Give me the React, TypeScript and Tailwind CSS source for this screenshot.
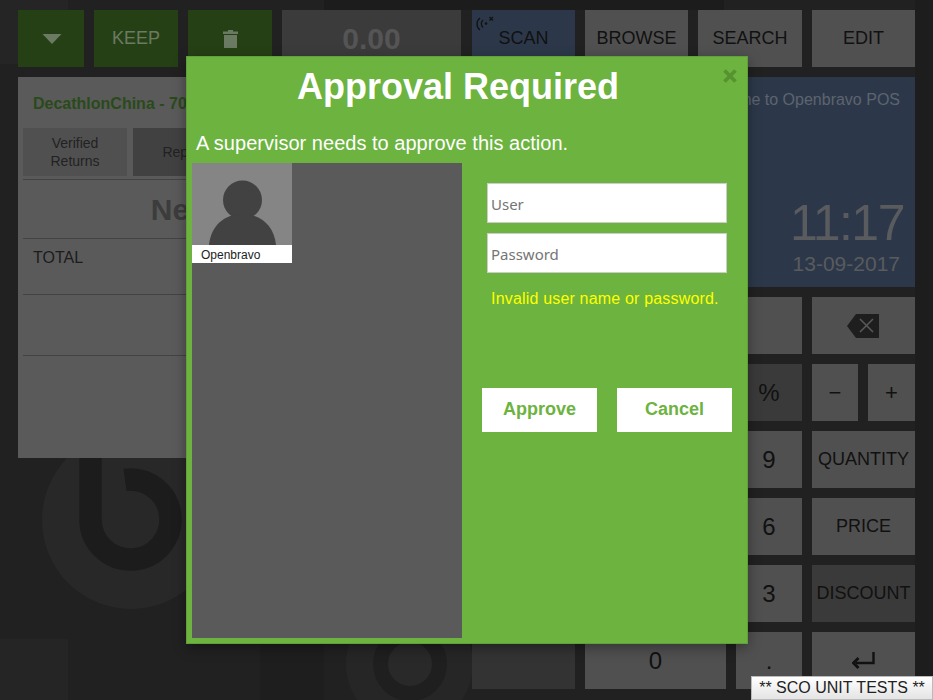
const sans = "font-['Liberation_Sans',Arial,sans-serif]";

function TopButton({ className, children }: { className: string; children: React.ReactNode }) {
  return (
    <div className={`relative flex h-[57px] items-center justify-center text-[18px] ${className}`}>
      {children}
    </div>
  );
}

function Key({ className = "bg-[#505050]", children }: { className?: string; children?: React.ReactNode }) {
  return (
    <div className={`flex h-[57px] items-center justify-center text-[18px] text-[#111] ${className}`}>
      {children}
    </div>
  );
}

function Backdrop() {
  return (
    <svg className="absolute inset-0" width="933" height="700" viewBox="0 0 933 700">
      <rect width="933" height="700" fill="#212121" />
      <rect x="0" y="0" width="68" height="64" fill="#252525" />
      <rect x="0" y="639" width="68" height="61" fill="#252525" />
      <rect x="260" y="640" width="64" height="60" fill="#1e1e1e" />
      <rect x="324" y="0" width="400" height="10" fill="#1c1c1c" />
      <rect x="915" y="0" width="18" height="700" fill="#1d1d1d" />
      <circle cx="131" cy="520" r="89" fill="#282828" />
      <path d="M90.500 440 V519.500 A40 40 0 1 0 125 479.900" fill="none" stroke="#1c1c1c" strokeWidth="22.500" />
      <circle cx="409.500" cy="664" r="63.500" fill="#262626" />
      <circle cx="410" cy="664" r="29.500" fill="#292929" stroke="#1f1f1f" strokeWidth="15" />
    </svg>
  );
}

function ApprovalDialog() {
  return (
    <div className="absolute left-[186px] top-[56px] h-[588px] w-[562px] border border-[#629f3a] bg-[#6cb33f] text-white shadow-[0_4px_12px_rgba(0,0,0,0.35)]">
      <svg className="absolute left-[536px] top-[12px]" width="14" height="14" viewBox="0 0 14 14">
        <path d="M1.500 1.500 L12.500 12.500 M12.500 1.500 L1.500 12.500" stroke="#579231" strokeWidth="3.600" />
      </svg>
      <h1 className="h-[60px] pr-[18px] pt-[9px] text-center text-[36px] leading-[42px] font-bold">Approval Required</h1>
      <p className="h-[46px] pl-[9px] pt-[15px] text-[20px] leading-[23px] tracking-[0.02px]">A supervisor needs to approve this action.</p>
      <div className="flex">
        <div className="ml-[5px] h-[475px] w-[270px] bg-[#5a5a5a]">
          <div className="w-[100px]">
            <div className="h-[82px] bg-[#858585]">
              <svg width="100" height="82" viewBox="0 0 100 82">
                <circle cx="50.500" cy="37" r="19.500" fill="#424242" />
                <path d="M17 82 C19 62 33 51 50.500 51 C68 51 82 62 84 82 Z" fill="#424242" />
              </svg>
            </div>
            <div className="h-[18px] bg-white pl-[9px] text-[12px] leading-[21px] text-[#222]">Openbravo</div>
          </div>
        </div>
        <div className="ml-[19px] w-[251px] pt-[20px]">
          <div className="ml-[6px] flex h-[40px] w-[240px] items-center border border-[#cccccc] bg-white pl-[3px] pt-[2px] font-['Noto_Sans',sans-serif] text-[15px] text-[#757575]">
            User
          </div>
          <div className="ml-[6px] mt-[10px] flex h-[40px] w-[240px] items-center border border-[#cccccc] bg-white pl-[3px] pt-[2px] font-['Noto_Sans',sans-serif] text-[15px] text-[#757575]">
            Password
          </div>
          <p className="ml-[10px] mt-[17px] text-[16px] leading-[18px] tracking-[0.18px] text-[#ffff00]">Invalid user name or password.</p>
          <div className="ml-[1px] mt-[80px] flex gap-[20px]">
            <div className="flex h-[44px] w-[115px] items-center justify-center pb-[2px] bg-white text-[18px] font-bold text-[#6cb33f]">Approve</div>
            <div className="flex h-[44px] w-[115px] items-center justify-center pb-[2px] bg-white text-[18px] font-bold text-[#6cb33f]">Cancel</div>
          </div>
        </div>
      </div>
    </div>
  );
}

export default function App() {
  return (
    <div className={`relative h-[700px] w-[933px] overflow-hidden ${sans}`}>
      <Backdrop />

      <div className="relative flex flex-col pl-[18px] pt-[10px]">
        <div className="flex gap-[10px]">
          <TopButton className="w-[66px] bg-[#264015]">
            <svg className="ml-[2px]" width="20" height="10" viewBox="0 0 20 10">
              <path d="M0.500 0 H19.500 L10 10 Z" fill="#6b7a62" />
            </svg>
          </TopButton>
          <TopButton className="w-[84px] bg-[#264015] text-[#6b7a62]">KEEP</TopButton>
          <TopButton className="w-[84px] bg-[#264015]">
            <svg width="15" height="18" viewBox="0 0 15 18">
              <path d="M5 0 H10 V1.500 H15 V4 H0 V1.500 H5 Z M1 5 H14 V18 H1 Z" fill="#6b7a62" />
            </svg>
          </TopButton>
          <TopButton className="w-[179px] bg-[#3b3b3b] text-[30px] font-bold text-[#555555]">0.00</TopButton>
          <TopButton className="ml-[1px] w-[103px] bg-[#2c3849] text-[#111]">
            <svg className="absolute left-[4px] top-[5px]" width="20" height="18" viewBox="0 0 20 18" fill="none" stroke="#111" strokeWidth="1.300">
              <path d="M4 15 A7.500 7.500 0 0 1 4 3" />
              <path d="M7 12.500 A5 5 0 0 1 7 5" />
              <circle cx="10" cy="8.500" r="1.300" fill="#111" stroke="none" />
              <path d="M13.500 2 L17 5.500 M17 2 L13.500 5.500" />
            </svg>
            SCAN
          </TopButton>
          <TopButton className="w-[103px] bg-[#505050] text-[#111]">BROWSE</TopButton>
          <TopButton className="w-[104px] bg-[#505050] text-[#111]">SEARCH</TopButton>
          <TopButton className="w-[103px] bg-[#505050] text-[#111]">EDIT</TopButton>
        </div>

        <div className="mt-[10px] flex">
          <section className="h-[381px] w-[444px] bg-[#5a5a5a] pl-[5px] pr-[5px] text-[#111]">
            <h2 className="h-[51px] pl-[10px] pt-[18px] text-[16px] leading-[18px] font-bold text-[#2a4a1a]">DecathlonChina - 7001</h2>
            <div className="flex gap-[6px] border-b border-[#434343] pb-[3px]">
              <div className="flex h-[48px] w-[104px] items-center justify-center bg-[#505050] text-center text-[14px] leading-[18px] text-[#222]">
                Verified
                <br />
                Returns
              </div>
              <div className="flex h-[48px] w-[104px] items-center justify-center bg-[#414141] text-[14px] text-[#222]">Reprint</div>
            </div>
            <div className="flex h-[59px] items-center justify-center border-b border-[#434343] text-[30px] font-bold text-[#3c3c3c]">New Receipt</div>
            <div className="h-[56px] border-b border-[#434343] pl-[10px] pt-[9px] text-[16px] leading-[20px] text-[#1c1c1c]">TOTAL</div>
            <div className="h-[61px] border-b border-[#434343]" />
          </section>

          <div className="ml-[10px] flex w-[443px] flex-col gap-[10px]">
            <section className="flex h-[210px] flex-col items-end bg-[#2c3849] pr-[15px] text-[#5c6470]">
              <p className="pt-[13px] text-[16px] leading-[20px]">Welcome to Openbravo POS</p>
              <p className="-mr-[4px] mt-[85px] text-[50px] leading-[56px] tracking-[-1.500px] text-[#595b5e]">11:17</p>
              <p className="mt-[1px] text-[21px] leading-[24px] text-[#595b5e]">13-09-2017</p>
            </section>

            <div className="grid grid-cols-[103px_66px_65px_66px_103px] gap-x-[10px] gap-y-[10px]">
              <Key className="bg-[#3b3b3b]" />
              <Key />
              <Key />
              <Key />
              <Key>
                <svg width="33" height="24" viewBox="0 0 33 24">
                  <path d="M9 0 H32 V24 H9 L0 12 Z" fill="#1e1e1e" />
                  <path d="M13 5 L26 18 M26 5 L13 18" stroke="#5a5a5a" strokeWidth="1.500" />
                </svg>
              </Key>

              <Key className="bg-[#3b3b3b]" />
              <Key />
              <Key />
              <Key className="bg-[#3a3a3a] text-[24px]">%</Key>
              <div className="grid grid-cols-[46px_47px] gap-[10px]">
                <Key className="bg-[#505050] text-[22px]">−</Key>
                <Key className="bg-[#505050] text-[22px]">+</Key>
              </div>

              <Key className="bg-[#3b3b3b]" />
              <Key />
              <Key />
              <Key className="bg-[#505050] text-[24px]">9</Key>
              <Key>QUANTITY</Key>

              <Key className="bg-[#3b3b3b]" />
              <Key />
              <Key />
              <Key className="bg-[#505050] text-[24px]">6</Key>
              <Key>PRICE</Key>

              <Key className="bg-[#3b3b3b]" />
              <Key />
              <Key />
              <Key className="bg-[#505050] text-[24px]">3</Key>
              <Key className="bg-[#3a3a3a]">DISCOUNT</Key>

              <Key className="bg-[#333333]" />
              <Key className="col-span-2 bg-[#505050] text-[24px]">0</Key>
              <Key className="bg-[#505050] text-[24px]">.</Key>
              <Key>
                <svg width="23" height="17" viewBox="0 0 23 17" fill="none" stroke="#111" strokeWidth="2.400">
                  <path d="M21.500 0 V11 H4" />
                  <path d="M6.500 6 L1.500 11 L6.500 16" strokeWidth="2.800" />
                </svg>
              </Key>
            </div>
          </div>
        </div>
      </div>

      <ApprovalDialog />

      <div className="absolute left-[751px] top-[676px] flex h-[24px] w-[182px] items-center justify-center border border-[#bbbbbb] bg-gradient-to-b from-white to-[#e4e4e4] text-[16px] text-[#222]">
        ** SCO UNIT TESTS **
      </div>
    </div>
  );
}
